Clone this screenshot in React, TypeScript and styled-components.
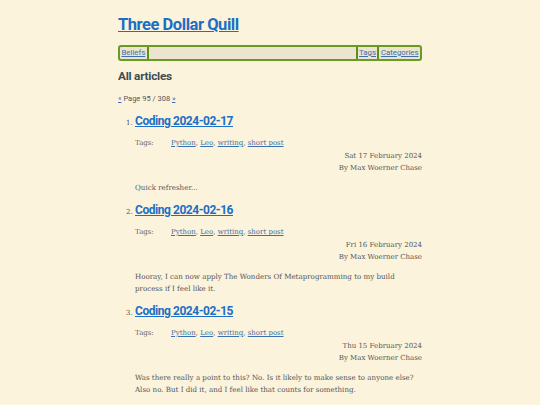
import styled, { createGlobalStyle } from 'styled-components';

const GlobalStyle = createGlobalStyle`
  html, body {
    margin: 0;
    padding: 0;
    background: #fbf3dc;
  }
  body {
    font-family: "DejaVu Serif", serif;
    color: #555;
  }
`

const Page = styled.div`
  width: 304px;
  margin: 0 auto;
  padding-top: 14px;
`

const SiteTitle = styled.h1`
  margin: 0;
  font-family: Roboto, "Open Sans", sans-serif;
  font-size: 16.5px;
  line-height: 22px;
  font-weight: 700;
  letter-spacing: -0.45px;
  a {
    color: #1b6fc5;
  }
`

const Nav = styled.nav`
  margin-top: 9px;
  display: flex;
  height: 12px;
  border: 2px solid #6a9a26;
  border-radius: 3px;
  background: #ebe4cf;
  font-family: Roboto, sans-serif;
  font-size: 7.8px;
  line-height: 12px;
`

const NavLink = styled.a<{ $edge?: 'left' | 'right' }>`
  color: #3d6fa8;
  padding: 0 1.5px;
  ${p => p.$edge === 'left' ? 'border-right: 2px solid #5e8f1c;' : ''}
  ${p => p.$edge === 'right' ? 'border-left: 2px solid #5e8f1c;' : ''}
`

const Spacer = styled.div`
  flex: 1;
`

const Heading = styled.h2`
  margin: 7px 0 0;
  font-family: Roboto, sans-serif;
  font-size: 11.8px;
  line-height: 16px;
  font-weight: 700;
  letter-spacing: -0.25px;
  color: #404b52;
`

const Pager = styled.p`
  margin: 9px 0 0;
  font-family: Roboto, sans-serif;
  font-size: 7.5px;
  line-height: 12px;
  color: #555;
  a {
    color: #3d6fa8;
  }
`

const List = styled.ol`
  margin: 8px 0 0;
  padding-left: 17px;
  font-size: 7px;
`

const Item = styled.li`
  margin-bottom: 8px;
  &::marker {
    color: #555;
  }
`

const ItemTitle = styled.h3`
  margin: 0;
  font-family: Roboto, sans-serif;
  font-size: 12px;
  line-height: 16px;
  font-weight: 700;
  letter-spacing: -0.45px;
  a {
    color: #1b6fc5;
  }
`

const TagRow = styled.div`
  margin-top: 8px;
  display: grid;
  grid-template-columns: 36px 1fr;
  font-size: 7px;
  line-height: 12px;
  color: #666;
  a {
    color: #3d6fa8;
  }
`

const Meta = styled.div`
  margin-top: 1px;
  text-align: right;
  font-size: 7px;
  line-height: 12px;
  color: #555;
`

const Summary = styled.p`
  margin: 8px 0 0;
  font-size: 7.1px;
  line-height: 12px;
  color: #555;
`

const articles = [
  {
    title: 'Coding 2024-02-17',
    date: 'Sat 17 February 2024',
    summary: 'Quick refresher...',
  },
  {
    title: 'Coding 2024-02-16',
    date: 'Fri 16 February 2024',
    summary: 'Hooray, I can now apply The Wonders Of Metaprogramming to my build process if I feel like it.',
  },
  {
    title: 'Coding 2024-02-15',
    date: 'Thu 15 February 2024',
    summary: 'Was there really a point to this? No. Is it likely to make sense to anyone else? Also no. But I did it, and I feel like that counts for something.',
  },
]

const tags = ['Python', 'Leo', 'writing', 'short post']

export default () => {
  return (
    <>
      <GlobalStyle />
      <Page>
        <SiteTitle><a href="#">Three Dollar Quill</a></SiteTitle>
        <Nav>
          <NavLink href="#" $edge="left">Beliefs</NavLink>
          <Spacer />
          <NavLink href="#" $edge="right">Tags</NavLink>
          <NavLink href="#" $edge="right">Categories</NavLink>
        </Nav>
        <Heading>All articles</Heading>
        <Pager><a href="#">«</a> Page 95 / 308 <a href="#">»</a></Pager>
        <List>
          {articles.map((article) => <Item key={article.title}>
            <ItemTitle><a href="#">{article.title}</a></ItemTitle>
            <TagRow>
              <span>Tags:</span>
              <span>
                {tags.map((tag, i) => <span key={tag}>
                  <a href="#">{tag}</a>{i < tags.length - 1 ? ', ' : ''}
                </span>)}
              </span>
            </TagRow>
            <Meta>
              <div>{article.date}</div>
              <div>By Max Woerner Chase</div>
            </Meta>
            <Summary>{article.summary}</Summary>
          </Item>)}
        </List>
      </Page>
    </>
  );
};
